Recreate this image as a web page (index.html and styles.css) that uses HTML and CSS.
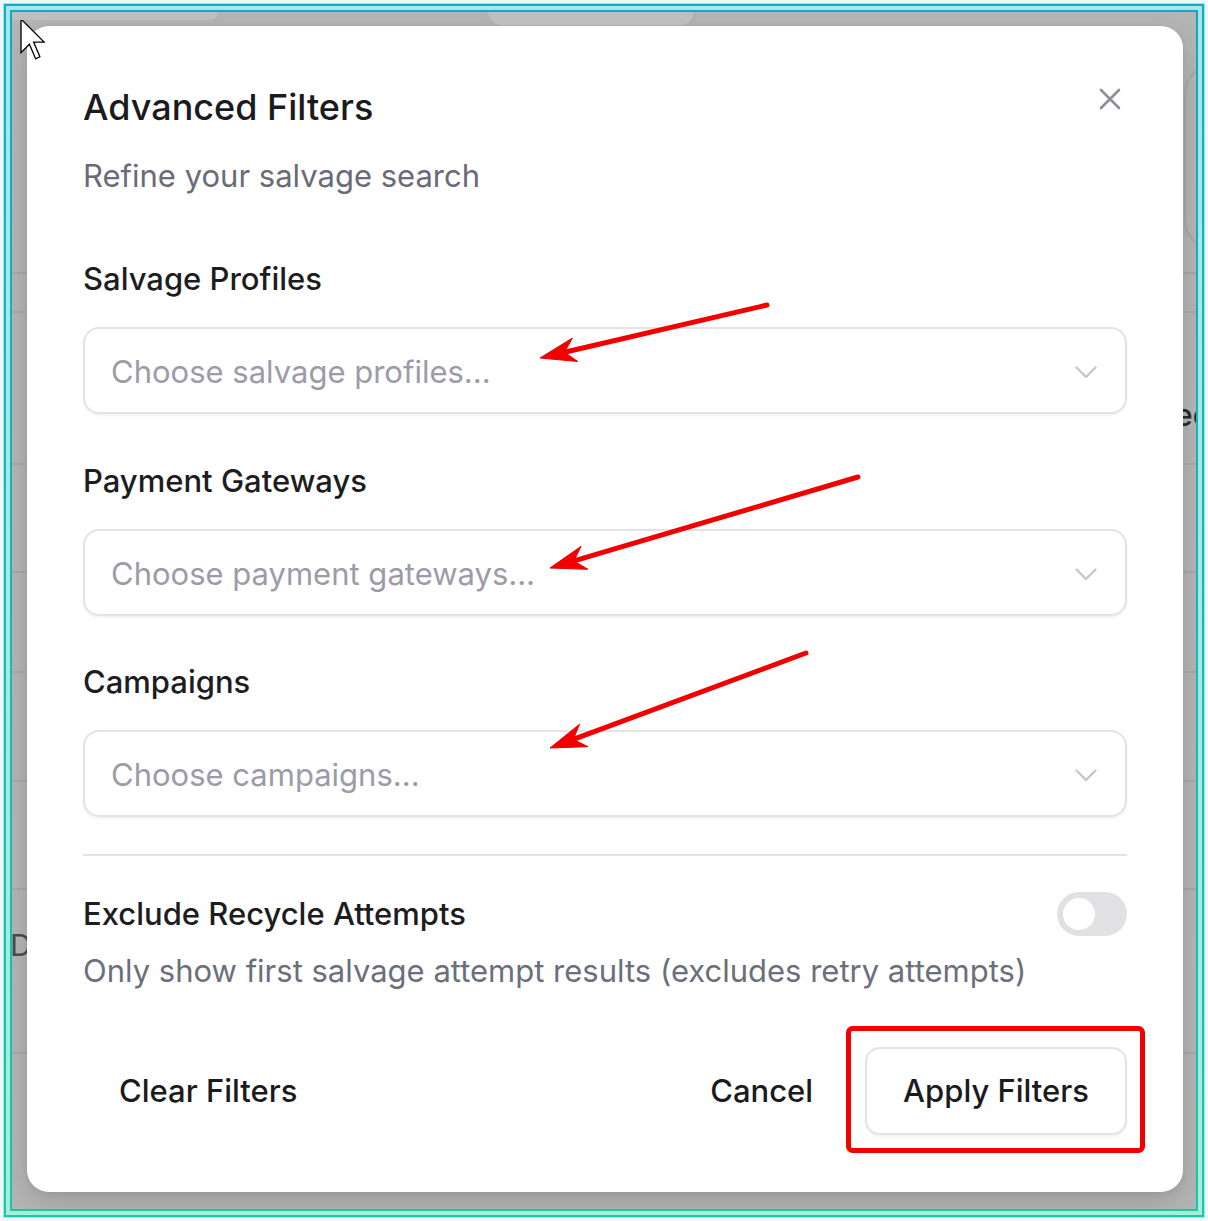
FILE: index.html
```html
<!DOCTYPE html>
<html lang="en">
<head>
<meta charset="utf-8">
<title>Advanced Filters</title>
<link rel="stylesheet" href="styles.css">
</head>
<body>
<div class="frame">
  <div class="frame-mid">
    <div class="frame-light">
      <div class="frame-in">
        <div class="screen">
          <div class="bg-top">
            <div class="tab tab-a"></div>
            <div class="tab tab-b"></div>
          </div>
          <div class="bg-rows">
            <div class="row row-1"><div class="pill"></div></div>
            <div class="row row-2"></div>
            <div class="row row-3"><span class="bg-text bg-right">Dec</span></div>
            <div class="row row-4"></div>
            <div class="row row-5"></div>
            <div class="row row-6"></div>
            <div class="row row-7"></div>
            <div class="row row-8"><span class="bg-text bg-left">D</span></div>
            <div class="row row-9"></div>
          </div>

          <div class="overlay">
            <div class="modal">
              <button class="close" aria-label="Close">
                <svg width="22" height="22" viewBox="0 0 22 22"><path d="M2 2 L20 20 M20 2 L2 20" fill="none" stroke="#8e8e98" stroke-width="2.6" stroke-linecap="round"/></svg>
              </button>
              <h2 class="title">Advanced Filters</h2>
              <p class="subtitle">Refine your salvage search</p>

              <div class="field first">
                <div class="label">Salvage Profiles</div>
                <div class="select">
                  <span class="placeholder">Choose salvage profiles...</span>
                  <svg class="chev" width="22" height="13" viewBox="0 0 22 13"><path d="M1.5 1.5 L11 11 L20.5 1.5" fill="none" stroke="#c6c6cc" stroke-width="2.4" stroke-linecap="round" stroke-linejoin="round"/></svg>
                </div>
              </div>
              <div class="field second">
                <div class="label">Payment Gateways</div>
                <div class="select">
                  <span class="placeholder">Choose payment gateways...</span>
                  <svg class="chev" width="22" height="13" viewBox="0 0 22 13"><path d="M1.5 1.5 L11 11 L20.5 1.5" fill="none" stroke="#c6c6cc" stroke-width="2.4" stroke-linecap="round" stroke-linejoin="round"/></svg>
                </div>
              </div>
              <div class="field third">
                <div class="label">Campaigns</div>
                <div class="select">
                  <span class="placeholder">Choose campaigns...</span>
                  <svg class="chev" width="22" height="13" viewBox="0 0 22 13"><path d="M1.5 1.5 L11 11 L20.5 1.5" fill="none" stroke="#c6c6cc" stroke-width="2.4" stroke-linecap="round" stroke-linejoin="round"/></svg>
                </div>
              </div>

              <div class="divider"></div>

              <div class="toggle-row">
                <div class="label">Exclude Recycle Attempts</div>
                <div class="switch"><div class="knob"></div></div>
              </div>
              <p class="desc">Only show first salvage attempt results (excludes retry attempts)</p>

              <div class="footer">
                <button class="btn ghost clear">Clear Filters</button>
                <div class="footer-right">
                  <button class="btn ghost">Cancel</button>
                  <button class="btn outline">Apply Filters</button>
                </div>
              </div>
            </div>
          </div>

          <svg class="cursor" width="30" height="42" viewBox="0 0 30 42">
            <path d="M1 1 L1 34.6 L9.4 26.2 L15.7 40.9 L19.9 38.8 L13.6 24.1 L24.1 24.1 Z" fill="#ffffff" stroke="#000000" stroke-width="1.3" stroke-linejoin="miter"/>
          </svg>
        </div>
      </div>
    </div>
  </div>
</div>

<svg class="annot" width="1208" height="1221" viewBox="0 0 1208 1221">
  <g fill="#f20000" stroke="#f20000">
    <line x1="767" y1="305" x2="564.5" y2="352.3" stroke-width="5" stroke-linecap="round"/>
    <polygon points="540,358 577.8,361.5 564.5,352.3 572.4,338.1" stroke-width="1" stroke-linejoin="round"/>
    <line x1="858" y1="477" x2="574" y2="560.9" stroke-width="5" stroke-linecap="round"/>
    <polygon points="550,568 587.9,569.3 574,560.9 581.1,546.3" stroke-width="1" stroke-linejoin="round"/>
    <line x1="806" y1="653" x2="573.4" y2="739.3" stroke-width="5" stroke-linecap="round"/>
    <polygon points="550,748 587.9,746.7 573.4,739.3 579.5,724.3" stroke-width="1" stroke-linejoin="round"/>
  </g>
  <rect x="848.5" y="1028.5" width="294" height="122" rx="4" fill="none" stroke="#f20000" stroke-width="5"/>
</svg>
</body>
</html>
```

FILE: styles.css
```css
* { box-sizing: border-box; }

html, body {
  margin: 0;
  padding: 0;
}

body {
  width: 1208px;
  height: 1221px;
  background: #eef8f8;
  font-family: Inter, "Noto Sans", "Liberation Sans", sans-serif;
  position: relative;
  overflow: hidden;
}

.frame {
  width: 1202px;
  height: 1215px;
  margin: 3px;
  padding: 1px;
  background: linear-gradient(#9fe2e8, #a3ead8);
}

.frame-mid {
  height: 100%;
  padding: 2px;
  background: linear-gradient(#12adc2, #17c9ad);
}

.frame-light {
  height: 100%;
  padding: 4px;
  background: linear-gradient(#a6e6ec, #a8ecdc);
}

.frame-in {
  height: 100%;
  padding: 2px;
  background: linear-gradient(#0fabc0, #14c8a8);
}

.screen {
  position: relative;
  height: 100%;
  overflow: hidden;
  background: #b5b5b5;
}

/* dimmed page behind the dialog */
.bg-top {
  height: 16px;
  display: flex;
  position: relative;
  z-index: 1;
}

.tab {
  background: #bebebe;
}

.tab-a {
  width: 206px;
  height: 8px;
  border-bottom-right-radius: 8px;
}

.tab-b {
  width: 208px;
  height: 14px;
  margin-left: 269px;
  border: 1px solid #ababab;
  border-top: none;
  border-radius: 0 0 14px 14px;
}

.bg-rows {
  margin-top: -16px;
}

.row {
  border-bottom: 2px solid #a9a9a9;
  display: flex;
  align-items: center;
}

.row-1 { height: 262px; align-items: flex-start; justify-content: flex-end; }
.row-2 { height: 39px; }
.row-3 { height: 152px; justify-content: flex-end; }
.row-4 { height: 108px; }
.row-5 { height: 100px; }
.row-6 { height: 109px; }
.row-7 { height: 108px; }
.row-8 { height: 164px; }
.row-9 { height: 157px; border-bottom: none; }

.pill {
  width: 60px;
  height: 186px;
  margin-top: 52px;
  margin-right: -48px;
  border: 2px solid #a9a9a9;
  border-radius: 40px;
}

.bg-text {
  font-size: 30px;
  font-weight: 500;
  color: #2b2b2b;
  line-height: 36px;
}

.bg-right {
  margin-right: -14px;
  margin-top: 54px;
}

.bg-left {
  margin-left: -2px;
  color: #4b4b4f;
  font-weight: 400;
  margin-top: -52px;
}

/* dialog */
.overlay {
  position: absolute;
  inset: 0;
  display: flex;
  align-items: flex-start;
  padding: 14px 0 0 15px;
}

.modal {
  position: relative;
  width: 1156px;
  height: 1166px;
  background: #ffffff;
  border-radius: 22px;
  padding: 60px 56px 56px;
  box-shadow: 0 10px 30px rgba(0, 0, 0, 0.14), 0 2px 6px rgba(0, 0, 0, 0.06);
}

.close {
  position: absolute;
  top: 62px;
  right: 62px;
  width: 22px;
  height: 22px;
  padding: 0;
  border: none;
  background: none;
  display: flex;
}

.title {
  margin: 0;
  font-size: 36px;
  line-height: 43px;
  font-weight: 500;
  color: #1b1b1d;
}

.subtitle {
  margin: 23px 0 0;
  font-size: 31px;
  line-height: 48px;
  color: #6b6b78;
}

.field.first { margin-top: 55px; }
.field.second { margin-top: 43px; }
.field.third { margin-top: 42px; }

.label {
  font-size: 31px;
  line-height: 48px;
  font-weight: 500;
  color: #1d1d1f;
}

.select {
  margin-top: 24px;
  height: 87px;
  border: 2px solid #e3e3e6;
  border-radius: 16px;
  display: flex;
  align-items: center;
  justify-content: space-between;
  padding: 3px 28px 0 26px;
  box-shadow: 0 2px 3px rgba(0, 0, 0, 0.05);
}

.placeholder {
  font-size: 31px;
  line-height: 48px;
  color: #9c9ca8;
}

.chev {
  display: block;
}

.divider {
  margin-top: 37px;
  height: 2px;
  background: #e4e4e7;
}

.toggle-row {
  margin-top: 34px;
  display: flex;
  align-items: center;
  justify-content: space-between;
}

.switch {
  width: 70px;
  height: 44px;
  border-radius: 22px;
  background: #e1e1e3;
  padding: 6px;
}

.knob {
  width: 32px;
  height: 32px;
  border-radius: 50%;
  background: #ffffff;
}

.desc {
  margin: 9px 0 0;
  font-size: 31px;
  line-height: 48px;
  color: #6b6f7b;
}

.footer {
  margin-top: 52px;
  display: flex;
  justify-content: space-between;
  align-items: center;
}

.footer-right {
  display: flex;
  align-items: center;
  gap: 14px;
}

.btn {
  font-family: inherit;
  font-size: 31px;
  font-weight: 500;
  line-height: 48px;
  color: #1b1b1d;
  height: 88px;
  padding: 0 36px;
  border-radius: 15px;
  background: #ffffff;
  cursor: pointer;
}

.btn.clear {
  padding-left: 34px;
}

.ghost {
  border: 2px solid transparent;
}

.outline {
  border: 2px solid #e3e3e6;
  box-shadow: 0 2px 3px rgba(0, 0, 0, 0.06);
}

.cursor {
  position: absolute;
  left: 8px;
  top: 6px;
}

.annot {
  position: absolute;
  left: 0;
  top: 0;
  pointer-events: none;
}
```
